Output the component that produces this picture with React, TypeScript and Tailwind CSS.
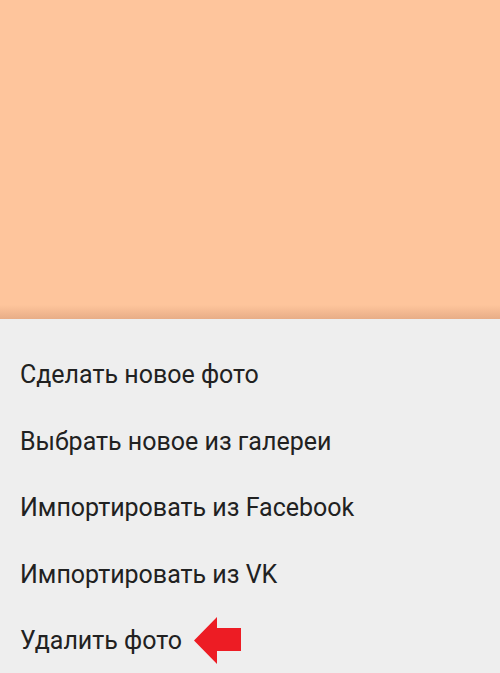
const ITEMS = [
  "Действия",
  "Сделать новое фото",
  "Выбрать новое из галереи",
  "Импортировать из Facebook",
  "Импортировать из VK",
  "Удалить фото",
];

function RedArrow() {
  return (
    <svg width="48" height="47" viewBox="0 0 48 47" className="ml-3 shrink-0">
      <polygon points="0,23.5 23,0 23,11 47,11 47,34 23,34 23,47" fill="#ed1c24" />
    </svg>
  );
}

export default function App() {
  return (
    <div className="flex h-[673px] w-[500px] flex-col overflow-hidden font-['Roboto',sans-serif]">
      <div className="relative h-[319px] shrink-0 bg-[#fec59c]">
        <div className="absolute inset-x-0 bottom-0 h-[14px] bg-gradient-to-b from-[#fec59c] to-[#e8ad87]" />
      </div>
      <div className="flex-1 overflow-hidden bg-[#eeeeee]">
        <ul className="mt-[-44px]">
          {ITEMS.map((item, i) => (
            <li
              key={item}
              className={
                i === 0
                  ? "flex h-[66.5px] items-center pb-[5px] pl-5 text-[25px] leading-none text-[#212121]"
                  : "flex h-[66.5px] items-center pl-5 text-[25px] leading-none text-[#212121]"
              }
            >
              <span>{item}</span>
              {i === ITEMS.length - 1 && <RedArrow />}
            </li>
          ))}
        </ul>
      </div>
    </div>
  );
}
